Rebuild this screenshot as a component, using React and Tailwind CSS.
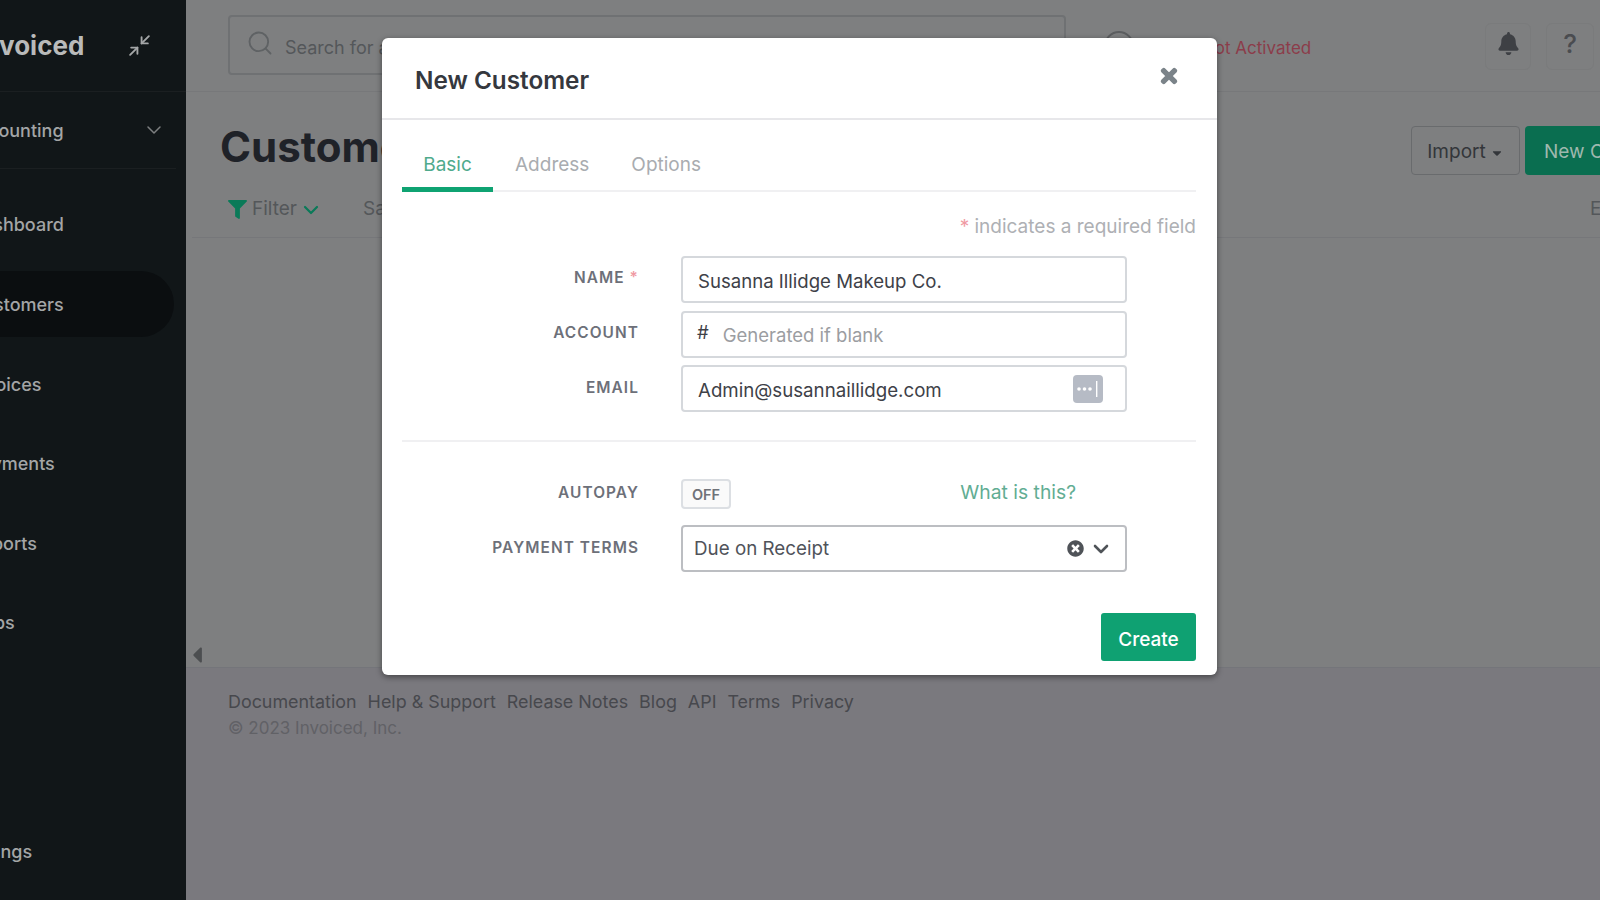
import { ChevronDown, Minimize2, Search } from "lucide-react";
import { FaBell, FaCaretDown, FaCaretLeft, FaFilter, FaTimes, FaTimesCircle } from "react-icons/fa";

const navItems = [
  { name: "Dashboard", className: "h-[80px]" },
  { name: "Customers", className: "h-[66px] my-[7px] mr-3 bg-[#0b0e10] rounded-r-[33px]" },
  { name: "Invoices", className: "h-[80px]" },
  { name: "Payments", className: "h-[79px]" },
  { name: "Reports", className: "h-[80px]" },
  { name: "Apps", className: "h-[79px]" },
];

const footerLinks = ["Documentation", "Help & Support", "Release Notes", "Blog", "API", "Terms", "Privacy"];

const Sidebar = () => {
  return (
    <div className="w-[186px] shrink-0 h-full bg-[#111618] flex flex-col overflow-hidden text-[#a3a5a6] text-[18px] font-medium">
      <div className="h-[92px] shrink-0 border-b border-[#1b1f21] flex items-center justify-between pr-[34px]">
        <span className="-ml-[24px] text-[26px] font-bold text-[#b9baba]">Invoiced</span>
        <Minimize2 size={25} strokeWidth={1.8} className="text-[#a5a7a8]" />
      </div>
      <div className="h-[77px] shrink-0 mr-[10px] border-b border-[#1b1f21] flex items-center justify-between pr-[10px]">
        <span className="-ml-[35px]">Accounting</span>
        <ChevronDown size={24} strokeWidth={1.5} className="text-[#7d7f80]" />
      </div>
      <nav className="flex flex-col mt-[15px]">
        {navItems.map((item) => (
          <div key={item.name} className={"flex items-center shrink-0 " + item.className}>
            <span className="-ml-[30px]">{item.name}</span>
          </div>
        ))}
      </nav>
      <div className="mt-auto h-[80px] flex items-start pt-[18px]">
        <span className="-ml-[38px] leading-[27px]">Settings</span>
      </div>
    </div>
  );
};

const Main = () => {
  return (
    <div className="flex-1 min-w-0 h-full flex flex-col overflow-hidden bg-[#7e7f80]">
      {/* Top bar */}
      <div className="h-[92px] shrink-0 border-b border-[#77787a] flex items-center pl-[42px]">
        <div className="w-[838px] h-[60px] shrink-0 border-2 border-[#6f7173] rounded flex items-center pl-[16px] gap-[11px] -mt-[2px]">
          <Search size={28} strokeWidth={1.6} className="text-[#5f6264] -mt-[4px]" />
          <span className="text-[18px] text-[#54575a] pt-[5px]">Search for anything</span>
        </div>
        <div className="w-[30px] h-[30px] ml-[38px] shrink-0 rounded-full border-2 border-[#5c5e60]" />
        <span className="ml-[68px] mt-[6px] text-[17px] text-[#8c3c4a] whitespace-nowrap">Not Activated</span>
        <div className="ml-auto flex gap-[15px] pr-[6px] mt-[2px]">
          <div className="w-[46px] h-[47px] pb-[6px] border border-[#7a7b7c] rounded-md flex items-center justify-center">
            <FaBell size={23} className="text-[#3e4044]" />
          </div>
          <div className="w-[48px] h-[47px] pb-[6px] border border-[#7a7b7c] rounded-md flex items-center justify-center text-[26px] font-medium text-[#4a4c50]">
            ?
          </div>
        </div>
      </div>

      {/* Title */}
      <div className="h-[100px] shrink-0 flex items-center pl-[34px] relative">
        <h1 className="text-[42px] font-bold text-[#1f2228] whitespace-nowrap leading-none mt-[10px]">Customers</h1>
        <div className="ml-auto flex gap-[5px] -mr-[85px] mt-[17px]">
          <div className="w-[109px] h-[49px] pt-[4px] border border-[#696b6d] rounded flex items-center justify-center gap-1 text-[19px] text-[#33363a]">
            Import
            <FaCaretDown size={14} />
          </div>
          <div className="w-[160px] h-[49px] pt-[4px] bg-[#0a6e50] rounded flex items-center pl-[19px] text-[19px] text-[#9fb8ae] whitespace-nowrap">
            New Customer
          </div>
        </div>
      </div>

      {/* Filter row */}
      <div className="h-[46px] shrink-0 ml-[6px] border-b border-[#76777a] flex items-center pl-[36px] pb-[10px] text-[19px] text-[#54575a]">
        <FaFilter size={19} className="text-[#0a7a58]" />
        <span className="ml-[5px]">Filter</span>
        <ChevronDown size={24} strokeWidth={2.2} className="ml-[2px] text-[#0a7a58]" />
        <span className="ml-[40px]">Saved</span>
        <span className="ml-auto -mr-[30px] whitespace-nowrap w-[40px]">Export</span>
      </div>

      {/* Empty list */}
      <div className="flex-1 flex items-end min-h-0">
        <FaCaretLeft size={26} className="text-[#4c4e50] -ml-[2px] -mb-[1px]" />
      </div>

      {/* Footer */}
      <div className="h-[233px] shrink-0 border-t border-[#74757a] bg-[#7a797e] pl-[42px] pt-[21px] leading-[26px]">
        <div className="flex gap-[11px] text-[17.9px] text-[#47484d]">
          {footerLinks.map((link) => (
            <span key={link}>{link}</span>
          ))}
        </div>
        <div className="text-[17px] text-[#616166]">© 2023 Invoiced, Inc.</div>
      </div>
    </div>
  );
};

const NewCustomerModal = () => {
  return (
    <div className="absolute left-[382px] top-[38px] w-[835px] h-[637px] bg-white rounded-md shadow-[0_2px_6px_rgba(0,0,0,0.45)] flex flex-col">
      <div className="h-[82px] shrink-0 border-b-2 border-[#e7e7ea] flex items-center justify-between pl-[33px] pr-[37px]">
        <h2 className="text-[24.3px] font-semibold text-[#35383e] mt-[4px]">New Customer</h2>
        <FaTimes size={22} stroke="currentColor" strokeWidth={30} className="text-[#7b8389] -mt-1" />
      </div>

      <div className="flex-1 flex flex-col pl-[20px] pr-[21px]">
        {/* Tabs */}
        <div className="h-[72px] shrink-0 flex items-end border-b-2 border-[#f0f0f2] text-[19px] text-[#a9acb0]">
          <div className="w-[91px] h-[72px] -mb-[2px] border-b-[5px] border-[#0fa372] flex items-center justify-center pt-[23px] text-[#4faa8c]">
            Basic
          </div>
          <div className="h-[72px] ml-[22px] flex items-center pt-[22px]">Address</div>
          <div className="h-[72px] ml-[42px] flex items-center pt-[22px]">Options</div>
        </div>

        <div className="mt-[21px] text-right text-[19px] leading-[27px] text-[#aeb0b4]">
          <span className="text-[#f09aa3]">*</span> indicates a required field
        </div>

        {/* Fields */}
        <div className="mt-[16px] flex flex-col gap-[7.7px]">
          <Row label="Name" required>
            <div className="h-[47px] border-2 border-[#d5d8dc] rounded flex items-center pl-[15px] pt-[4px] text-[18.6px] text-[#3e4148]">
              Susanna Illidge Makeup Co.
            </div>
          </Row>
          <Row label="Account">
            <div className="h-[47px] border-2 border-[#d5d8dc] rounded flex items-center pl-[14px] pt-[4px] text-[18.5px] text-[#9b9da1]">
              <span className="text-[#3e4148] mr-[14px] -mt-[6px]">#</span>
              Generated if blank
            </div>
          </Row>
          <Row label="Email">
            <div className="h-[47px] border-2 border-[#d5d8dc] rounded flex items-center justify-between pl-[15px] pr-[22px] pt-[1px] text-[18.7px] text-[#3e4148]">
              <span className="pt-[3px]">Admin@susannaillidge.com</span>
              <svg width="30" height="28" viewBox="0 0 30 28">
                <rect width="30" height="28" rx="4" fill="#b6bbc5" />
                <circle cx="6" cy="14" r="1.8" fill="#fff" />
                <circle cx="11.5" cy="14" r="1.8" fill="#fff" />
                <circle cx="17" cy="14" r="1.8" fill="#fff" />
                <rect x="23" y="6" width="1.4" height="16" fill="#fff" />
              </svg>
            </div>
          </Row>
        </div>

        <div className="mt-[28px] border-t-2 border-[#f0f0f2]" />

        <div className="mt-[37px] flex flex-col gap-[16px]">
          <Row label="Autopay">
            <div className="flex items-center justify-between h-[30px] pr-[51px]">
              <div className="w-[50px] h-[30px] border-2 border-[#dcdfe3] bg-[#fafafa] rounded flex items-center justify-center text-[14.5px] font-semibold text-[#6f7278]">
                OFF
              </div>
              <span className="text-[19.3px] text-[#62ad93] -mt-[3px]">What is this?</span>
            </div>
          </Row>
          <Row label="Payment Terms">
            <div className="h-[47px] border-2 border-[#bcbec2] rounded flex items-center justify-between pl-[11px] pr-[12px] text-[18.8px] text-[#50535a]">
              Due on Receipt
              <div className="flex items-center gap-[5px]">
                <FaTimesCircle size={17} className="text-[#4f5358]" />
                <ChevronDown size={24} strokeWidth={2.6} className="text-[#4f5358]" />
              </div>
            </div>
          </Row>
        </div>

        <div className="mt-[41px] flex justify-end">
          <div className="w-[95px] h-[48px] bg-[#0fa172] rounded-[3px] flex items-center justify-center pt-[5px] text-[19px] font-medium text-white">
            Create
          </div>
        </div>
      </div>
    </div>
  );
};

const Row = ({ label, required, children }) => {
  return (
    <div className="grid grid-cols-[237px_446px] gap-x-[42px] items-center">
      <div className="text-right text-[15.4px] font-semibold uppercase tracking-[0.07em] text-[#6d7079] -mt-[3px]">
        {label}
        {required && <span className="text-[#f09aa3] ml-[5px]">*</span>}
      </div>
      {children}
    </div>
  );
};

export default function App() {
  return (
    <div className="relative w-[1600px] h-[900px] flex overflow-hidden font-['Inter',sans-serif]">
      <Sidebar />
      <Main />
      <NewCustomerModal />
    </div>
  );
}
